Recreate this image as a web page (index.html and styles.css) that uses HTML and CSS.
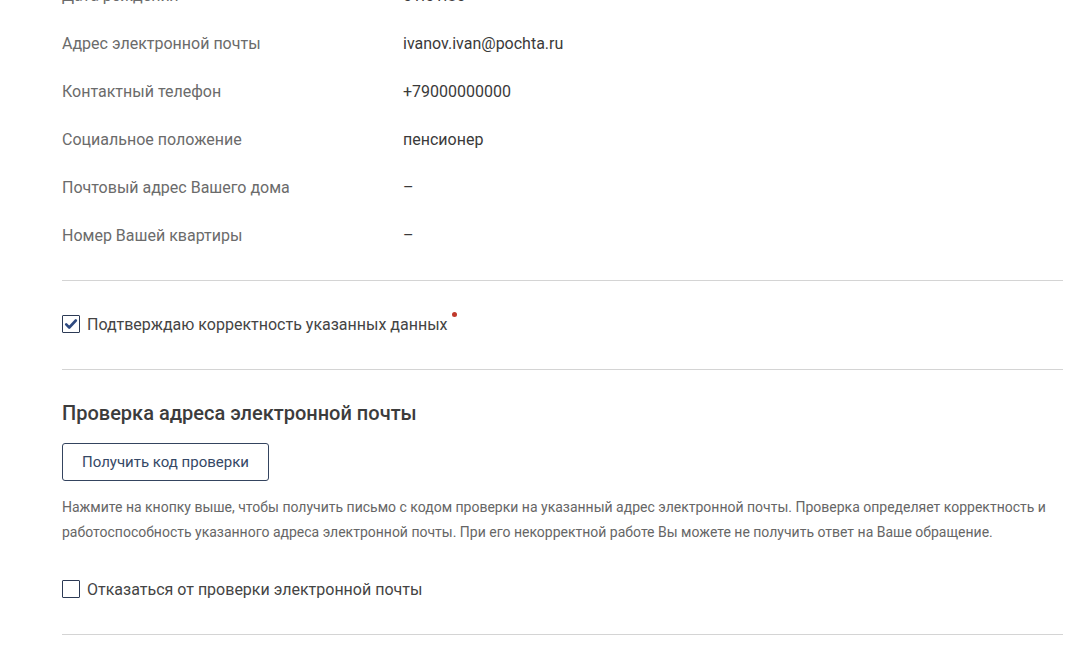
FILE: index.html
```html
<!DOCTYPE html>
<html lang="ru">
<head>
<meta charset="utf-8">
<link rel="stylesheet" href="styles.css">
</head>
<body>
<div class="page">
  <div class="rows">
    <div class="row"><div class="label">Дата рождения</div><div class="value">01.01.80</div></div>
    <div class="row"><div class="label">Адрес электронной почты</div><div class="value">ivanov.ivan@pochta.ru</div></div>
    <div class="row"><div class="label">Контактный телефон</div><div class="value">+79000000000</div></div>
    <div class="row"><div class="label">Социальное положение</div><div class="value">пенсионер</div></div>
    <div class="row"><div class="label">Почтовый адрес Вашего дома</div><div class="value">–</div></div>
    <div class="row"><div class="label">Номер Вашей квартиры</div><div class="value">–</div></div>
  </div>
  <hr class="divider first">
  <label class="check confirm">
    <span class="box checked">
      <svg viewBox="0 0 16 16" width="14" height="14"><path d="M2.5 8.5 L6 12 L13.5 4" fill="none" stroke="#2f4a80" stroke-width="3" stroke-linecap="round" stroke-linejoin="round"/></svg>
    </span>
    <span class="check-text">Подтверждаю корректность указанных данных</span><span class="req"></span>
  </label>
  <hr class="divider second">
  <h2 class="title">Проверка адреса электронной почты</h2>
  <button class="btn">Получить код проверки</button>
  <p class="hint">Нажмите на кнопку выше, чтобы получить письмо с кодом проверки на указанный адрес электронной почты. Проверка определяет корректность и работоспособность указанного адреса электронной почты. При его некорректной работе Вы можете не получить ответ на Ваше обращение.</p>
  <label class="check refuse">
    <span class="box"></span>
    <span class="check-text">Отказаться от проверки электронной почты</span>
  </label>
  <hr class="divider third">
</div>
</body>
</html>
```
FILE: styles.css
```css
html, body {
  margin: 0;
  padding: 0;
  background: #fff;
}
body {
  font-family: Roboto, "Liberation Sans", sans-serif;
  color: #333;
}
.page {
  width: 1001px;
  margin-left: 62px;
  margin-top: -29px;
}
.rows {
  display: flex;
  flex-direction: column;
}
.row {
  display: flex;
  height: 48px;
  align-items: center;
  font-size: 16px;
}
.label {
  width: 341px;
  color: #6b6b6b;
}
.value {
  color: #3a3a3a;
}
.divider {
  border: 0;
  border-top: 1px solid #d4d4d4;
  margin: 0;
  height: 0;
}
.divider.first { margin-top: 21px; }
.check {
  display: flex;
  align-items: center;
  height: 24px;
  font-size: 16px;
  color: #444;
}
.confirm {
  margin-top: 31px;
  margin-bottom: 33px;
}
.box {
  width: 16px;
  height: 16px;
  border: 1px solid #2c3a55;
  border-radius: 1px;
  display: flex;
  align-items: center;
  justify-content: center;
  margin-right: 7px;
  box-sizing: content-box;
}
.req {
  width: 5px;
  height: 5px;
  border-radius: 50%;
  background: #c0392b;
  align-self: flex-start;
  margin-left: 4px;
  margin-top: 0px;
}
.title {
  font-size: 20px;
  font-weight: 500;
  color: #3c3c3c;
  margin: 31px 0 0;
  line-height: 24px;
}
.btn {
  display: block;
  margin-top: 18px;
  height: 38px;
  width: 207px;
  border: 1px solid #34445f;
  border-radius: 3px;
  background: #fff;
  font-family: Roboto, "Liberation Sans", sans-serif;
  font-size: 15px;
  color: #354866;
  padding: 0;
}
.hint {
  margin: 14px 0 0;
  font-size: 14px;
  line-height: 25px;
  color: #666;
}
.refuse {
  margin-top: 32px;
}
.divider.third { margin-top: 33px; }
```
